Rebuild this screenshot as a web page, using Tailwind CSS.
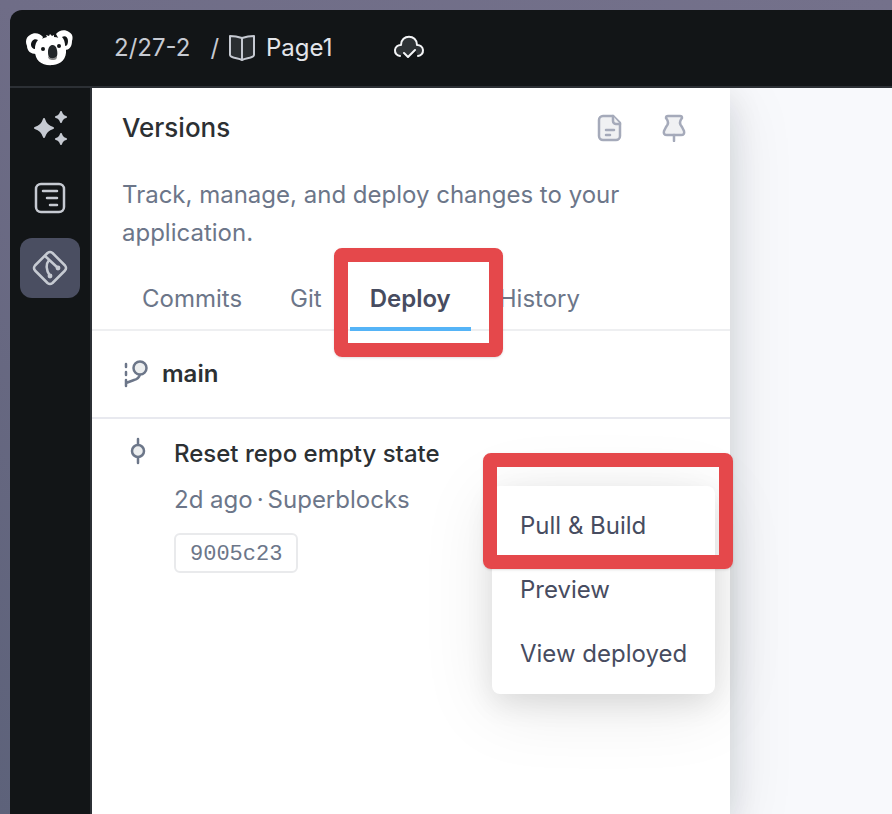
<!DOCTYPE html>
<html lang="en" class="h-full">
<head>
  <meta charset="UTF-8" />
  <meta name="viewport" content="width=device-width, initial-scale=1.0" />
  <title>Page1 - Versions</title>
  <script src="https://cdn.jsdelivr.net/npm/@tailwindcss/browser@4"></script>
</head>
<body class="h-screen overflow-hidden bg-linear-to-tr from-[#5d627a] via-[#6f6d87] to-[#74718b] pl-2.5 pt-2.5 font-['Inter',sans-serif] text-2xl text-[#6c7689]">

  <div class="relative flex h-full flex-col overflow-hidden rounded-tl-xl bg-[#121517]">

    <!-- Top bar -->
    <header class="flex h-[78px] shrink-0 items-center border-b-2 border-[#2c3035] pl-4 text-[#c6cad2]">
      <a href="#" aria-label="Home" class="w-[47px]">
        <svg class="h-9 w-[47px]" viewBox="0 0 47 36">
          <path d="M17 7C14 3 8 2 4 5c-4 2-5 7-3 11 0 5 4 8 9 8z" fill="#fff" />
          <path d="M30 4c3-4 9-5 13-2 4 2 4 6 3 9 0 6-3 9-7 9z" fill="#fff" />
          <path d="M5 15c0-4 3-7 7-5-2 2-3 5-3 9-2 0-4-2-4-4z" fill="#121517" />
          <path d="M42 11c0-4-3-6-6-4 2 2 3 5 3 9 2 0 3-2 3-5z" fill="#121517" />
          <path d="M9 21c0-7 3-12 12-14l-1-2 3 1 1-2 2 2 2-1v2c7 0 11 5 12 12 1 10-5 15-13 16C16 36 9 31 9 21z" fill="#fff" />
          <circle cx="17" cy="19" r="2" fill="#121517" />
          <circle cx="33" cy="16" r="2" fill="#121517" />
          <path d="M22 22c0-9 8-9 9-2 1 5 0 9-4 9s-5-3-5-7z" fill="#24282b" />
          <path d="M22 26c2 3 6 3 9 0 0 3-1 4-4 4s-5-1-5-4z" fill="#888" />
        </svg>
      </a>
      <nav class="ml-[41px] flex items-center">
        <a href="#">2/27-2</a>
        <span class="ml-5">/</span>
        <svg class="ml-[9px] h-7 w-7" viewBox="0 0 28 28" fill="#2a2e31" stroke="#c6cad2" stroke-width="2" stroke-linejoin="round">
          <path d="M2 2c5 0 9 1 12 2 3-1 7-2 12-2v19c0 3-8 3-12 5C10 24 2 24 2 21z" />
          <path d="M14 4v22" />
        </svg>
        <a href="#" class="ml-2.5 text-[#e3e5ea]">Page1</a>
      </nav>
      <button type="button" aria-label="Saved" class="ml-[60px] pb-1">
        <svg class="block h-6 w-8" viewBox="0 0 32 24" fill="none" stroke="#f4f5f7" stroke-width="2" stroke-linecap="round" stroke-linejoin="round">
          <path d="M7 22a5 5 0 0 1 1-11 8 8 0 0 1 16 0 5 5 0 0 1 1 11l-3-6-6 6-5-3z" fill="#2f3336" stroke="none" />
          <path d="M7 22a5 5 0 0 1 1-11c0-11 16-11 16 0a5 5 0 0 1 1 11" />
          <path d="M11 19l4 4 7-7" />
        </svg>
      </button>
    </header>

    <div class="flex flex-1">

      <!-- Sidebar -->
      <aside class="flex w-[82px] shrink-0 flex-col items-center gap-2.5 border-r-2 border-[#2c3035] pt-2.5">
        <button type="button" aria-label="AI" class="flex h-[60px] w-[60px] items-center justify-center rounded-xl">
          <svg class="h-9 w-9" viewBox="0 0 36 36" fill="#c6cad2" stroke="#c6cad2" stroke-linejoin="round" stroke-width="2">
            <path d="M12 9q2 7 9 9-7 2-9 9-2-7-9-9 7-2 9-9z" />
            <path d="M29 2q1 4 5 5-4 1-5 5-1-4-5-5 4-1 5-5z" />
            <path d="M29 24q1 4 5 5-4 1-5 5-1-4-5-5 4-1 5-5z" />
          </svg>
        </button>
        <button type="button" aria-label="Navigation" class="flex h-[60px] w-[60px] items-center justify-center rounded-xl">
          <svg class="h-8 w-8" viewBox="0 0 32 32" fill="none" stroke="#c6cad2" stroke-width="2.500" stroke-linecap="round">
            <rect x="2" y="2" width="28" height="28" rx="5" />
            <path d="M9 9h14M13 16h10M16 23h7" />
          </svg>
        </button>
        <button type="button" aria-label="Versions" class="flex h-[60px] w-[60px] items-center justify-center rounded-xl bg-[#4a4e61]">
          <svg class="h-9 w-9" viewBox="0 0 36 36" fill="none" stroke="#c6cad2" stroke-width="2.500" stroke-linecap="round" stroke-linejoin="round">
            <path d="M15.500 3q2.500-2 5 0L33 15.500q2 2.500 0 5L20.500 33q-2.500 2-5 0L3 20.500q-2-2.500 0-5z" />
            <path d="M13 6l13 12M17 10c-4 5-3 10 1 16" />
            <circle cx="26" cy="18" r="1.200" fill="#c6cad2" />
            <circle cx="18" cy="26" r="1.200" fill="#c6cad2" />
          </svg>
        </button>
      </aside>

      <main class="flex flex-1 overflow-hidden bg-[#f8f9fc]">

        <!-- Versions panel -->
        <section class="relative w-[638px] shrink-0 bg-white shadow-[0_16px_64px_rgba(20,25,35,0.1),0_12px_32px_rgba(20,25,35,0.12)]">
          <div class="flex h-20 items-center justify-between pl-[30px] pr-[42px]">
            <h1 class="text-[26px] font-medium text-[#2c3033]">Versions</h1>
            <div class="flex gap-9">
              <button type="button" aria-label="Documentation">
                <svg class="h-7 w-7" viewBox="0 0 28 28" fill="#f0f1f3" stroke="#a5aaba" stroke-width="2.500" stroke-linecap="round" stroke-linejoin="round">
                  <path d="M7 2h10l7 7v13a4 4 0 0 1-4 4H7a4 4 0 0 1-4-4V6a4 4 0 0 1 4-4z" />
                  <path d="M17 2v5a3 3 0 0 0 3 3h4M10 16h8M10 21h4" />
                </svg>
              </button>
              <button type="button" aria-label="Pin panel">
                <svg class="h-7 w-7" viewBox="0 0 28 28" fill="#f0f1f3" stroke="#a5aaba" stroke-width="2.500" stroke-linecap="round" stroke-linejoin="round">
                  <path d="M8 2h12q2 0 2 2-4 5 0 9l2 4q1 4-3 4H7q-4 0-3-4l2-4q4-4 0-9 0-2 2-2z" />
                  <path d="M14 21v6" />
                </svg>
              </button>
            </div>
          </div>
          <p class="px-[30px] pt-2 leading-[38px]">Track, manage, and deploy changes to your application.</p>

          <div role="tablist" class="mt-4 flex h-[63px] gap-2 border-b-2 border-[#eeeff1] pl-[30px]">
            <button type="button" role="tab" class="px-5">Commits</button>
            <button type="button" role="tab" class="px-5">Git</button>
            <div class="relative -mb-0.5 flex border-b-4 border-[#55b4f7]">
              <button type="button" role="tab" aria-selected="true" class="px-5 pt-0.5 font-semibold text-[#474c60]">Deploy</button>
              <div class="absolute -bottom-[30px] -left-4 -right-8 -top-5 z-10 rounded-lg border-14 border-[#e5484b] shadow-sm"></div>
            </div>
            <button type="button" role="tab" class="px-5">History</button>
          </div>

          <div class="flex h-[88px] items-center gap-3 border-b-2 border-[#e8e9ef] pl-[30px]">
            <svg class="h-7 w-7" viewBox="0 0 28 28" fill="none" stroke="#6c7689" stroke-width="2.500" stroke-linecap="round">
              <path d="M4 4v3M4 12v3M4 20v6M4 23l8-3q5-1 6-6" />
              <circle cx="18" cy="8" r="6.500" fill="#eceeef" />
            </svg>
            <h2 class="font-semibold text-[#2c3033]">main</h2>
          </div>

          <article class="flex gap-6 pl-8 pt-4">
            <svg class="mt-0.5 h-7 w-7" viewBox="0 0 28 28" fill="none" stroke="#6c7689" stroke-width="2.500" stroke-linecap="round">
              <path d="M14 2v5M14 20v6" />
              <circle cx="14" cy="14" r="6" fill="#eceeef" />
            </svg>
            <div class="-ml-0.5">
              <h3 class="leading-[38px] font-medium text-[#2c3033]">Reset repo empty state</h3>
              <p class="mt-2 flex gap-1 leading-[38px]"><span>2d ago</span><span>·</span><span>Superblocks</span></p>
              <code class="mt-3.5 flex h-10 w-fit items-center rounded-md border-2 border-[#e9eaec] px-3.5 pt-1 font-['Liberation_Mono',monospace] text-[22px]">9005c23</code>
            </div>
          </article>

          <!-- Deploy menu -->
          <div role="menu" class="absolute right-[15px] top-[398px] z-20 w-[223px] rounded-lg bg-white py-2 text-[#474c60] shadow-[0_12px_72px_rgba(0,0,0,0.1),0_10px_28px_rgba(0,0,0,0.09)]">
            <button type="button" role="menuitem" class="block h-16 w-full whitespace-nowrap px-7 text-left">Pull &amp; Build</button>
            <button type="button" role="menuitem" class="block h-16 w-full whitespace-nowrap px-7 text-left">Preview</button>
            <button type="button" role="menuitem" class="block h-16 w-full whitespace-nowrap px-7 text-left">View deployed</button>
            <div class="absolute -left-[9px] -right-[18px] -top-[33px] h-[116px] rounded-lg border-14 border-[#e5484b] shadow-sm"></div>
          </div>
        </section>
      </main>
    </div>
  </div>

</body>
</html>
